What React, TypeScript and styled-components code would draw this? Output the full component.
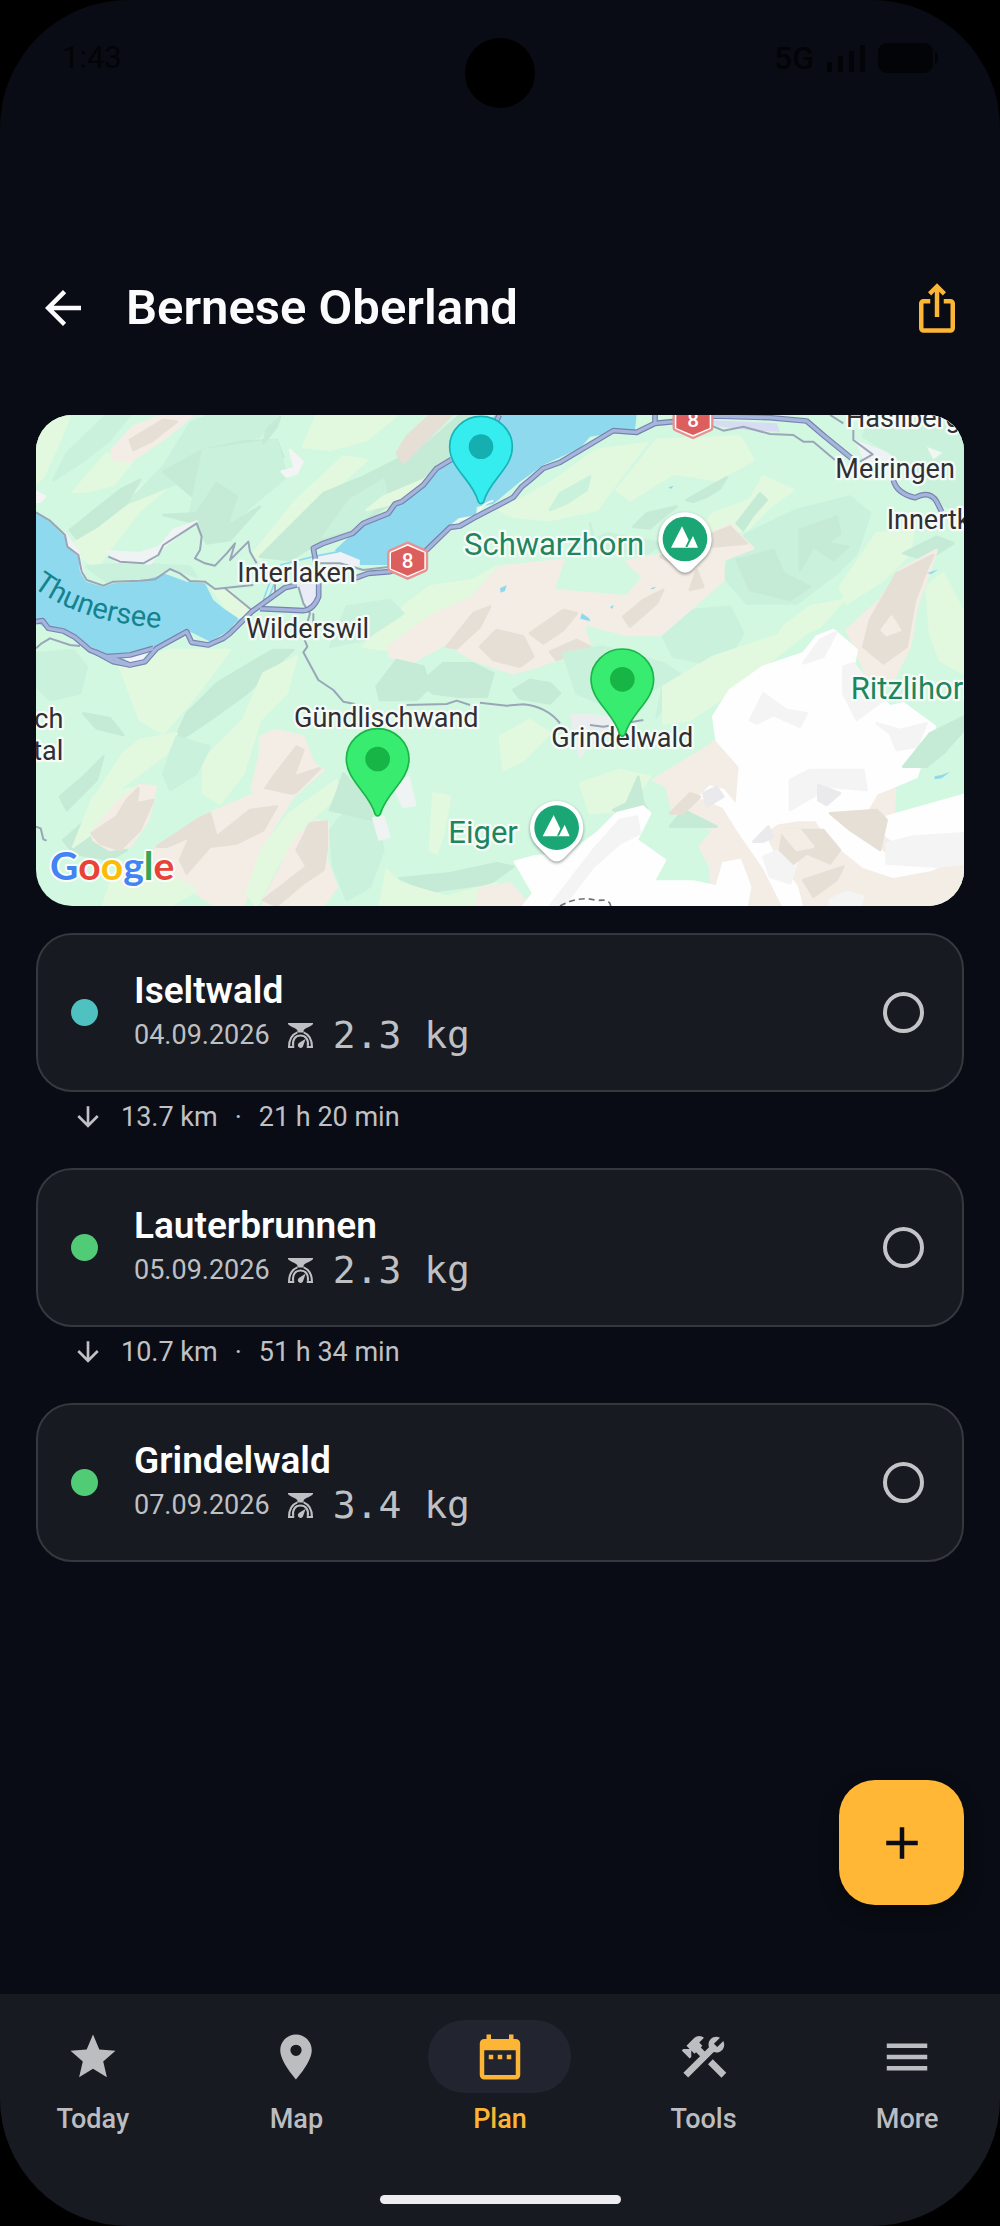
import React from "react";
import styled, { createGlobalStyle } from "styled-components";
import {
  MdAdd,
  MdArrowBack,
  MdArrowDownward,
  MdConstruction,
  MdDateRange,
  MdIosShare,
  MdMenu,
  MdPlace,
  MdStar,
} from "react-icons/md";

const stops = [
  {
    id: 1,
    name: "Iseltwald",
    date: "04.09.2026",
    weight: "2.3 kg",
    color: "#4fc1c0",
    leg: { distance: "13.7 km", time: "21 h 20 min" },
  },
  {
    id: 2,
    name: "Lauterbrunnen",
    date: "05.09.2026",
    weight: "2.3 kg",
    color: "#52cb76",
    leg: { distance: "10.7 km", time: "51 h 34 min" },
  },
  {
    id: 3,
    name: "Grindelwald",
    date: "07.09.2026",
    weight: "3.4 kg",
    color: "#52cb76",
    leg: null,
  },
];

const tabs = [
  { label: "Today", icon: MdStar },
  { label: "Map", icon: MdPlace },
  { label: "Plan", icon: MdDateRange },
  { label: "Tools", icon: MdConstruction },
  { label: "More", icon: MdMenu },
];

const LIGHT = "#e2f9df";
const MINT = "#c5ead5";
const MINT_SOFT = "#caf1dc";
const SAND = "#f3ede5";
const SAND_DARK = "#e6dfd6";
const SNOW = "#fefefe";
const SNOW_DARK = "#f4f4f5";

// relief facets, painted in order: [fill, points]
const relief: [string, string][] = [
  [LIGHT, "18,45 120,45 90,120 40,230 18,250"],
  [MINT_SOFT, "230,45 300,45 240,120 150,190 70,240 110,160"],
  [LIGHT, "130,430 260,320 360,240 470,140 540,95 500,190 330,330 200,500 150,470"],
  [LIGHT, "130,275 230,160 310,180 250,255 160,275"],
  [MINT_SOFT, "290,310 400,200 480,70 540,45 740,45 690,110 510,150 440,250 340,290"],
  [MINT, "400,215 520,150 640,125 740,120 760,170 700,150 610,200 560,290 500,300"],
  [MINT_SOFT, "520,150 740,120 770,230 650,330 560,420 480,340"],
  [MINT, "120,390 270,270 330,240 290,310 200,380 140,415"],
  [MINT, "400,345 500,340 560,250 620,290 590,380 690,320 600,420 530,430 500,370"],
  [MINT_SOFT, "170,500 300,490 480,500 500,530 420,500 370,530 230,545"],
  [MINT, "710,90 750,50 740,80 700,130"],
  [LIGHT, "860,45 1100,45 1010,120 900,150 820,140"],
  [LIGHT, "670,460 800,300 940,170 1010,180 900,280 760,400 690,480"],
  [MINT, "690,470 880,280 1000,230 1180,140 1290,45 1370,45 1260,180 1100,300 960,390 860,430 780,480"],
  [MINT_SOFT, "960,300 1060,240 1070,290 980,380 880,410"],
  [LIGHT, "1010,330 1060,290 1180,240 1240,190 1170,260 1090,310"],
  [SAND, "245,150 310,80 400,45 490,45 410,110 300,185 250,180"],
  [SAND_DARK, "300,120 400,60 440,65 370,120 310,150"],
  [SAND_DARK, "1100,160 1130,110 1200,45 1265,45 1200,110 1120,190"],
  [SNOW_DARK, "755,215 795,205 780,150 817,185 800,220 770,230"],
  [SNOW_DARK, "18,275 45,290 30,305 18,305"],
  ["#f0f3f3", "235,455 330,460 390,440 430,390 500,365 400,440 360,490 260,485"],
  ["#f0f3f3", "105,400 145,455 160,530 140,480 115,440"],
  [LIGHT, "550,570 590,565 660,630 630,655 590,625"],
  [LIGHT, "1410,330 1560,250 1700,150 1850,130 1780,220 1700,330 1560,360 1450,350"],
  [MINT_SOFT, "1590,280 1680,230 1670,270 1610,310 1560,330"],
  [LIGHT, "1880,120 2130,110 2170,180 2060,240 1930,220 1800,300 1760,270"],
  [MINT, "1970,300 2040,260 2090,232 2070,265 2030,290 1990,305"],
  [MINT, "1810,380 1850,340 1940,320 1900,350 1860,385"],
  [MINT_SOFT, "1680,370 1690,420 1730,400 1900,430 1850,460 1700,450"],
  [LIGHT, "2200,230 2290,270 2220,320 2150,390 2000,400 2050,340 2160,300"],
  [MINT, "2120,370 2190,280 2210,300 2170,345 2140,390"],
  [MINT_SOFT, "2150,400 2300,330 2460,290 2520,340 2480,460 2420,520 2300,610 2150,610 2080,530 2100,460"],
  [MINT, "2310,390 2420,350 2430,400 2390,430 2455,440 2410,480 2350,440 2310,510"],
  [MINT, "2120,480 2230,450 2260,520 2340,560 2280,600 2160,570"],
  [MINT_SOFT, "2520,45 2802,45 2802,340 2700,300 2600,170 2500,110"],
  [LIGHT, "2430,560 2540,400 2650,390 2640,460 2560,540 2450,610"],
  [MINT, "2620,460 2720,410 2770,430 2690,480"],
  [LIGHT, "2260,680 2340,620 2440,600 2370,680 2240,740 2200,790"],
  [LIGHT, "2690,560 2740,520 2802,640 2802,820 2730,780 2700,700"],
  [MINT_SOFT, "1990,630 2100,620 2140,700 2080,800 1930,770 1900,710"],
  [LIGHT, "1120,620 1200,560 1330,540 1400,500 1320,590 1190,660 1070,750 1000,740"],
  [MINT_SOFT, "950,620 1080,600 1120,640 1000,720 900,740"],
  [SAND, "1075,740 1200,650 1330,590 1410,500 1600,480 1570,570 1790,590 1840,530 1790,485 1890,465 2100,375 2170,445 2080,480 2080,540 1990,620 1890,705 1790,705 1660,670 1680,740 1520,800 1450,820 1330,780 1250,730 1140,790 1080,770"],
  [SAND_DARK, "1350,740 1400,690 1480,710 1510,770 1470,800 1390,780"],
  [SAND_DARK, "1250,740 1330,640 1380,620 1350,680 1280,745"],
  [SAND_DARK, "1890,470 2000,420 2100,380 2150,430 2040,440 1930,490"],
  [SAND_DARK, "1780,650 1840,600 1900,570 1880,610 1800,680"],
  [SAND_DARK, "1500,700 1600,630 1640,640 1600,690 1540,730"],
  [SAND_DARK, "1980,570 2000,510 2020,560"],
  [SAND_DARK, "1560,755 1640,720 1680,740 1580,780"],
  [SAND, "2720,450 2610,510 2550,600 2450,690 2500,800 2510,840 2590,840 2640,740 2660,620 2700,510"],
  [SAND_DARK, "2710,465 2600,520 2560,590 2520,660 2500,740 2560,790 2630,740 2655,600 2690,510"],
  [SAND, "2555,690 2585,650 2610,690 2570,705"],
  [MINT, "1040,860 1100,780 1180,800 1200,860 1160,900 1050,900"],
  [MINT, "1170,850 1240,790 1330,790 1390,820 1370,890 1290,890 1210,880"],
  [MINT, "1450,870 1500,840 1560,850 1590,880 1560,910 1470,895"],
  [MINT_SOFT, "1600,760 1720,740 1900,790 1960,830 1880,950 1900,850 1760,930 1640,880"],
  [LIGHT, "1900,860 2050,770 2260,700 2340,690 2200,800 2110,870 1980,960 1900,970"],
  [LIGHT, "1410,1010 1500,960 1560,1000 1480,1080 1420,1110"],
  [LIGHT, "1650,1150 1770,1110 1860,1130 1790,1230 1680,1240"],
  [MINT, "430,1030 470,940 560,850 660,790 730,750 790,750 650,880 540,960 480,1000"],
  [LIGHT, "270,800 420,750 600,750 540,830 470,920 400,1000 330,960"],
  [LIGHT, "520,1080 640,960 700,820 800,770 770,880 690,960 640,1120 570,1210 520,1180"],
  [MINT_SOFT, "18,760 130,750 170,800 150,880 60,900 18,860"],
  [MINT, "160,940 240,955 280,1005 200,985"],
  [LIGHT, "280,1060 330,1020 440,1000 410,1060 250,1180 190,1200"],
  [MINT, "90,1190 160,1130 220,1070 200,1140 110,1230"],
  [MINT, "100,1320 180,1250 200,1290 190,1330 290,1350 240,1380 130,1360"],
  [MINT_SOFT, "400,1120 440,1010 540,1040 500,1120 420,1170"],
  [LIGHT, "130,1340 190,1190 330,1160 200,1290"],
  [SAND, "185,1300 260,1210 330,1155 377,1160 355,1260 300,1340 240,1350 190,1320"],
  [SAND_DARK, "185,1300 260,1250 290,1200 325,1165 320,1210 370,1200 330,1290 270,1350 210,1330"],
  [SAND, "690,1010 740,990 820,1010 850,1090 880,1110 800,1180 700,1190 665,1170 690,1060"],
  [SAND_DARK, "730,1130 800,1040 820,1050 790,1130 870,1105 800,1175 730,1200 690,1190"],
  [SAND, "380,1340 540,1240 700,1170 790,1190 720,1300 680,1400 640,1518 560,1518 480,1470 440,1430 400,1430 350,1410"],
  [SAND_DARK, "380,1340 500,1260 540,1240 560,1310 660,1230 740,1220 700,1290 620,1330 540,1340 470,1420 450,1380 480,1310 410,1340"],
  [LIGHT, "250,1420 380,1400 500,1470 420,1518 220,1518"],
  [LIGHT, "650,1480 700,1340 780,1240 920,1140 930,1180 820,1280 740,1400 680,1518"],
  [SAND, "700,1500 800,1310 860,1260 895,1270 890,1380 920,1460 880,1518 700,1518"],
  [SAND_DARK, "700,1500 830,1400 800,1350 840,1270 890,1265 890,1350 880,1410 820,1450 740,1518"],
  [MINT_SOFT, "900,1290 960,1220 1040,1250 1060,1350 1020,1460 950,1500 910,1400"],
  [MINT, "920,1180 940,1120 1010,1190 1030,1260 900,1230"],
  [LIGHT, "1200,1350 1210,1180 1260,1190 1240,1300 1220,1360"],
  [MINT, "1110,1435 1260,1420 1400,1390 1450,1400 1380,1450 1200,1475"],
  [LIGHT, "1070,1410 1110,1450 1250,1490 1400,1450 1470,1518 1050,1518"],
  [SAND, "1340,1518 1350,1465 1440,1450 1500,1518"],
  ["#f0f3f3", "1095,1165 1135,1130 1155,1215 1120,1220"],
  ["#f0f3f3", "1030,1255 1060,1250 1078,1310 1048,1318"],
  ["#ecedef", "1625,945 1670,945 1790,960 1800,1000 1690,1010 1650,1070 1640,1030"],
  [MINT, "1750,1230 1790,1210 1825,1130 1840,1210 1850,1225 1780,1250"],
  [SAND, "1870,1140 2000,1060 2080,1010 2160,1080 2300,1250 2500,1230 2560,1150 2595,1170 2590,1260 2802,1380 2802,1518 2050,1518 2040,1400 2010,1340 2050,1290 1930,1240 1910,1160"],
  [MINT, "1920,1280 1960,1230 2060,1280 1980,1280"],
  [SNOW, "2360,710 2410,690 2480,750 2470,800 2580,920 2620,910 2715,980 2690,1040 2660,1130 2590,1160 2540,1180 2500,1250 2450,1260 2300,1260 2240,1270 2200,1300 2240,1380 2300,1460 2315,1518 2260,1518 2200,1400 2130,1300 2080,1220 2010,1190 2040,1160 2080,1170 2120,1220 2130,1100 2060,1020 2050,950 2100,870 2200,800 2320,760"],
  [SNOW, "2330,1220 2480,1250 2560,1360 2650,1370 2560,1300 2570,1250 2802,1185 2802,1370 2700,1410 2590,1430 2500,1400 2400,1320"],
  [SNOW, "1455,1385 1510,1370 1620,1360 1700,1300 1760,1240 1840,1220 1860,1240 1820,1320 1905,1380 1870,1445 1990,1445 2060,1460 2080,1390 2130,1380 2160,1460 2150,1518 1480,1518 1510,1480"],
  [SNOW_DARK, "2160,960 2200,880 2270,930 2330,940 2310,980 2230,945 2180,970"],
  [SNOW_DARK, "2320,790 2370,720 2420,695 2380,770"],
  [SNOW_DARK, "2540,970 2610,990 2690,970 2660,1040 2600,1050 2580,1000"],
  [SNOW_DARK, "2440,800 2470,790 2560,900 2480,960 2440,880"],
  [SNOW_DARK, "2280,1140 2340,1110 2500,1110 2510,1170 2400,1160 2280,1230"],
  [SNOW_DARK, "2570,1330 2650,1310 2802,1300 2800,1390 2720,1400 2570,1390"],
  [SNOW_DARK, "1690,1350 1770,1260 1820,1250 1830,1300 1770,1330 1690,1400 1600,1518 1560,1518"],
  [SNOW_DARK, "2200,1370 2250,1350 2300,1390 2280,1450 2220,1430"],
  [SNOW_DARK, "2400,1500 2450,1475 2500,1490 2490,1518 2400,1518"],
  ["#eae9eb", "2020,1180 2060,1160 2080,1190 2030,1220"],
  ["#eae9eb", "2170,1325 2215,1280 2230,1310 2200,1325"],
  ["#eae9eb", "2365,1155 2430,1180 2390,1215 2365,1200"],
  [SAND_DARK, "2260,1290 2380,1290 2430,1350 2400,1390 2330,1360 2290,1390 2250,1350"],
  [SAND, "2250,1290 2310,1290 2350,1340 2300,1350"],
  [SAND_DARK, "2400,1240 2540,1230 2570,1260 2550,1350 2460,1290"],
  [SAND_DARK, "2320,1440 2440,1400 2420,1440 2350,1490"],
  [SAND_DARK, "1920,1240 1980,1180 2010,1190 1960,1240"],
  [MINT, "2620,1100 2700,1000 2802,950 2802,990 2740,1060 2690,1100"],
];

const shields = [
  { x: 1133, y: 482 },
  { x: 1989, y: 60 },
];

const peaks = [
  { x: 1965, y: 417 },
  { x: 1580, y: 1283 },
];

const towns = [
  { name: "Interlaken", x: 622, y: 546 },
  { name: "Wilderswil", x: 648, y: 713 },
  { name: "Hasliberg", x: 2448, y: 80 },
  { name: "Meiringen", x: 2416, y: 235 },
  { name: "Innertkirchen", x: 2570, y: 388 },
  { name: "Gündlischwand", x: 792, y: 980 },
  { name: "Grindelwald", x: 1564, y: 1041 },
];

const summits = [
  { name: "Schwarzhorn", x: 1302, y: 465 },
  { name: "Ritzlihorn", x: 2462, y: 898 },
  { name: "Eiger", x: 1255, y: 1330 },
];

const pins = [
  { x: 1353, y: 140, fill: "#35edef", line: "#17b4b8", dot: "#15aeb1" },
  { x: 1043, y: 1077, fill: "#37ec6e", line: "#1bb44b", dot: "#16b546" },
  { x: 1777, y: 838, fill: "#37ec6e", line: "#1bb44b", dot: "#16b546" },
];

const mainRoads = [
  "M960 540L1015 520L1080 515L1150 490L1195 445L1260 382L1290 378L1330 355L1450 292L1475 260L1500 240L1540 205L1590 187L1750 92L1820 97L1875 70L1930 65L1990 50L2050 48L2220 53L2330 63L2385 110L2465 175",
  "M2590 240Q2600 280 2655 293Q2700 270 2720 305L2735 335",
  "M860 500L850 445L880 430L968 400L1000 370L1075 340L1095 312L1115 305L1180 255L1220 205L1265 178M1400 62L1408 45M1875 45V75",
  "M866 550V590Q850 630 820 632L690 626M800 555L765 563L665 635L600 700L580 715L535 735L485 727L470 695L380 745L345 785L300 795L240 770",
  "M18 665L38 662L55 685L100 693L135 712L180 750L230 770L300 765L370 745",
  "M195 755L250 785L300 795",
];

const minorRoads = [
  "M18 337L60 362L105 405L112 440L145 465L155 515L170 540L220 557L250 545L330 542L375 538L420 507L450 520L480 543L525 545L555 567L670 555",
  "M235 470L270 485L340 490L385 465L400 435L500 370L515 410L510 450L495 475L525 490L555 497L590 460L615 430L600 480L655 425L660 455L680 490",
  "M585 565L665 630M805 560L820 610L840 640L820 710L832 740L820 757L865 840L910 870L940 905L975 912",
  "M1130 915L1250 912L1280 902L1320 915M1350 908L1430 917L1480 913Q1550 920 1590 970M1680 975L1720 980L1840 960",
  "M18 745L35 730L60 715L120 735L150 738M18 1280L32 1285L40 1318L50 1322",
  "M2040 75L2080 92L2140 80L2220 102L2290 105L2320 125L2350 125L2415 180M2490 185L2528 163L2470 120L2470 90M2400 45L2440 70",
  "M735 550V590M850 640V700M850 490H930L1000 510L1080 500",
];

function RouteMap() {
  return (
    <MapSvg viewBox="18 45 2784 1473" preserveAspectRatio="xMidYMid slice">
      <rect x="18" y="45" width="2784" height="1473" fill="#d2f8e2" />
      {relief.map(([fill, points]) => (
        <polygon
          key={points}
          points={points}
          fill={fill}
          stroke={fill}
          strokeWidth="8"
          strokeLinejoin="round"
        />
      ))}

      {/* lakes */}
      <g fill="#8fd9ee">
        <path d="M18 337L60 365L105 410L112 440L145 470L150 515L168 545L220 560L250 550L330 545L385 528L400 520L430 530L470 545L525 550L550 600L580 625L625 655L600 690L540 725L490 700L470 692L400 735L370 750L300 770L230 768L190 745L130 705L40 680L18 665Z" />
        <path d="M915 450L985 385L1075 343L1110 312L1160 275L1215 215L1265 180L1395 45H1820L1815 90L1680 110L1650 145L1540 195L1470 245L1390 312L1340 320L1338 345L1285 355L1250 385L1200 440L1080 495H990L985 480L925 465Z" />
        <path d="M1410 565l20-10l-5 18l-13 5zM1655 640l22 14l4 10l-30-8zM1860 565l18-5l-8 8zM1740 620l12-5l-6 12zM1915 262l16-5l-8 10z" />
        <path d="M2715 1128l20-3l25-10l-25 20l-22 3zM2690 520l35-12l-20 14z" />
      </g>
      <path d="M865 465L930 455L990 480L988 497L930 500L860 490Z" fill="#eef1f5" />
      <path d="M805 550L870 550L865 600L830 625Z" fill="#e9ecf6" />
      <path d="M275 768L350 758L335 782L300 786Z" fill="#f1f5fb" />
      <path d="M1390 302Q1345 315 1340 350L1290 358L1250 392M1470 252L1550 205L1660 152" fill="none" stroke="#f4f9f4" strokeWidth="5" />
      <path d="M2040 60L2240 70L2250 95L2170 92L2060 78Z" fill="#d7dcf3" />
      <path d="M2475 120L2570 155L2620 200L2600 260L2500 180Z" fill="#eff2f4" />
      <path d="M2690 140L2738 158L2710 178Z" fill="#f1f6f3" />
      <path d="M700 600L722 540M712 605L735 545M750 495L850 470L925 455L940 430M610 670L690 625" fill="none" stroke="#8fd9ee" strokeWidth="5" />

      {/* roads */}
      <g fill="none" stroke="#9aa6b8" strokeWidth="6" strokeLinejoin="round">
        {minorRoads.map((d) => (
          <path key={d} d={d} />
        ))}
      </g>
      <g fill="none" stroke="#7683ae" strokeWidth="17" strokeLinejoin="round">
        {mainRoads.map((d) => (
          <path key={d} d={d} />
        ))}
      </g>
      <g fill="none" stroke="#a6b5dc" strokeWidth="10" strokeLinejoin="round">
        {mainRoads.map((d) => (
          <path key={d} d={d} />
        ))}
      </g>
      <path
        d="M1590 1518Q1650 1485 1700 1502Q1740 1495 1742 1518"
        fill="none"
        stroke="#6f7177"
        strokeWidth="5"
        strokeDasharray="18 12"
      />

      {shields.map((shield) => (
        <g key={shield.x} transform={`translate(${shield.x} ${shield.y})`}>
          <path
            d="M0 -54L54 -30Q58 -28 58 -22V22Q58 28 54 30L0 54L-54 30Q-58 28 -58 22V-22Q-58 -28 -54 -30Z"
            fill="#fff"
            stroke="#e79291"
            strokeWidth="7"
          />
          <path d="M0 -45L50 -24V24L0 45L-50 24V-24Z" fill="#dc5e5d" />
          <ShieldText x="0" y="22">8</ShieldText>
        </g>
      ))}

      {towns.map((town) => (
        <TownText key={town.name} x={town.x} y={town.y}>{town.name}</TownText>
      ))}
      <TownText x="100" y="983" textAnchor="end">ch</TownText>
      <TownText x="100" y="1079" textAnchor="end">tal</TownText>
      {summits.map((summit) => (
        <SummitText key={summit.name} x={summit.x} y={summit.y}>
          {summit.name}
        </SummitText>
      ))}
      <path id="thunersee" d="M8 560Q160 678 440 686" fill="none" />
      <LakeText>
        <textPath href="#thunersee">Thunersee</textPath>
      </LakeText>

      {peaks.map((peak) => (
        <Peak key={peak.x} transform={`translate(${peak.x} ${peak.y})`}>
          <path d="M0 -80A80 80 0 0 1 60 53L20 93Q0 110 -20 93L-60 53A80 80 0 0 1 0 -80Z" fill="#fff" />
          <circle r="67" fill="#1ba675" />
          <path d="M-42 26L-9 -38L11 3L1 24H7L24 -9L39 26Z" fill="#fff" />
        </Peak>
      ))}

      {pins.map((pin) => (
        <g key={pin.x} transform={`translate(${pin.x} ${pin.y})`}>
          <path
            d="M0 -91C52 -91 94 -49 94 0C94 66 25 100 8 165Q0 177 -8 165C-25 100 -94 66 -94 0C-94 -49 -52 -91 0 -91Z"
            fill={pin.fill}
            stroke={pin.line}
            strokeWidth="5"
          />
          <circle r="37" fill={pin.dot} />
        </g>
      ))}

      <LogoText x="60" y="1439">
        <tspan fill="#4284f3">G</tspan>
        <tspan fill="#e94236">o</tspan>
        <tspan fill="#fabc06">o</tspan>
        <tspan fill="#4284f3">g</tspan>
        <tspan fill="#35a753">l</tspan>
        <tspan fill="#e94236">e</tspan>
      </LogoText>
    </MapSvg>
  );
}

function ScaleIcon() {
  return (
    <svg width="25" height="25" viewBox="0 0 24 24" aria-hidden="true">
      <path d="M0 0H24V1C22 3.500 17 4.500 15 7V9H9V7C7 4.500 2 3.500 0 1Z" fill="currentColor" />
      <path
        d="M9 9C4 11 1 16 1 23H6M15 9C20 11 23 16 23 23H18M5 22C4 16 7 12 12 12S20 16 19 22"
        fill="none"
        stroke="currentColor"
        strokeWidth="2"
      />
      <path d="M17 15L14.600 21.800A2.600 2.600 0 1 1 10.800 19Z" fill="currentColor" />
    </svg>
  );
}

export default function App() {
  return (
    <>
      <GlobalStyle />
      <Screen>
        <StatusBar>
          <Clock>1:43</Clock>
          <Camera />
          <StatusIcons>
            <span>5G</span>
            <svg width="40" height="27" viewBox="0 0 40 27" aria-hidden="true">
              <path d="M1 17h5v10H1zM12 11h5v16h-5zM23 6h5v21h-5zM34 0h5v27h-5z" fill="currentColor" />
            </svg>
            <svg width="60" height="30" viewBox="0 0 60 30" aria-hidden="true">
              <rect width="55" height="30" rx="9" fill="currentColor" />
              <path d="M57 9q3 1 3 6t-3 6z" fill="currentColor" />
            </svg>
          </StatusIcons>
        </StatusBar>

        <Header>
          <IconButton aria-label="Back">
            <MdArrowBack />
          </IconButton>
          <Title>Bernese Oberland</Title>
          <IconButton $accent aria-label="Share">
            <MdIosShare />
          </IconButton>
        </Header>

        <Main>
          <MapCard>
            <RouteMap />
          </MapCard>

          <StopList>
            {stops.map((stop) => (
              <li key={stop.id}>
                <StopCard htmlFor={`stop-${stop.id}`}>
                  <Dot $color={stop.color} />
                  <StopInfo>
                    <StopName>{stop.name}</StopName>
                    <StopMeta>
                      <span>{stop.date}</span>
                      <ScaleIcon />
                      <Weight>{stop.weight}</Weight>
                    </StopMeta>
                  </StopInfo>
                  <StopCheck type="checkbox" id={`stop-${stop.id}`} />
                </StopCard>
                {stop.leg && (
                  <Leg>
                    <MdArrowDownward />
                    <span>{stop.leg.distance}</span>
                    <span>·</span>
                    <span>{stop.leg.time}</span>
                  </Leg>
                )}
              </li>
            ))}
          </StopList>

          <Fab aria-label="Add stop">
            <MdAdd />
          </Fab>
        </Main>

        <BottomBar>
          <Tabs>
            {tabs.map(({ label, icon: Icon }) => (
              <Tab key={label} href={`#${label.toLowerCase()}`} $active={label === "Plan"}>
                <TabIcon $active={label === "Plan"}>
                  <Icon />
                </TabIcon>
                {label}
              </Tab>
            ))}
          </Tabs>
          <HomeIndicator />
        </BottomBar>
      </Screen>
    </>
  );
}

const GlobalStyle = createGlobalStyle`
  * {
    box-sizing: border-box;
  }

  body {
    margin: 0;
    background-color: #000;
    font-family: Roboto, "Liberation Sans", sans-serif;
  }
`;

const Screen = styled.div`
  display: flex;
  flex-direction: column;
  min-height: 100vh;
  background-color: #090c14;
  border-radius: 128px;
  overflow: hidden;
`;

const StatusBar = styled.div`
  display: grid;
  grid-template-columns: 1fr 70px 1fr;
  align-items: start;
  padding: 38px 62px 0;
  margin-bottom: 128px;
  color: #020407;
`;

const Clock = styled.span`
  padding-top: 2px;
  font-size: 31px;
  line-height: 36px;
`;

const Camera = styled.div`
  height: 70px;
  border-radius: 50%;
  background-color: #000;
`;

const StatusIcons = styled.div`
  display: flex;
  align-items: center;
  justify-content: flex-end;
  gap: 12px;
  padding-top: 2px;
  font-size: 32px;
  font-weight: 500;
  line-height: 36px;
`;

const Header = styled.header`
  display: flex;
  align-items: center;
  gap: 36px;
  height: 143px;
  padding: 0 36px;
`;

const IconButton = styled.button<{ $accent?: boolean }>`
  display: flex;
  padding: 0;
  border: none;
  background: none;
  color: ${(props) => (props.$accent ? "#fdb535" : "#fbfbfd")};
  font-size: 54px;
  cursor: pointer;
`;

const Title = styled.h1`
  flex: 1;
  margin: 0;
  color: #fbfbfd;
  font-size: 49px;
  font-weight: 600;
  line-height: 56px;
`;

const Main = styled.main`
  display: flex;
  flex: 1;
  flex-direction: column;
  padding: 36px 36px 89px;
`;

const MapCard = styled.div`
  aspect-ratio: 928 / 491;
  border-radius: 36px;
  overflow: hidden;
`;

const MapSvg = styled.svg`
  display: block;
  width: 100%;
  height: 100%;
`;

const TownText = styled.text`
  fill: #2f3033;
  stroke: #f6fbf8;
  stroke-width: 14px;
  stroke-linejoin: round;
  paint-order: stroke;
  font-size: 81px;
`;

const SummitText = styled(TownText)`
  fill: #1d865d;
  font-size: 93px;
`;

const LakeText = styled.text`
  fill: #12838f;
  font-size: 87px;
`;

const ShieldText = styled.text`
  fill: #fff;
  font-size: 62px;
  font-weight: 500;
  text-anchor: middle;
`;

const LogoText = styled.text`
  stroke: #fafdfb;
  stroke-width: 12px;
  stroke-linejoin: round;
  paint-order: stroke;
  font-family: Lato, Roboto, sans-serif;
  font-size: 117px;
  font-weight: 700;
`;

const Peak = styled.g`
  filter: drop-shadow(0 4px 5px rgba(40, 50, 50, 0.5));
`;

const StopList = styled.ul`
  margin: 27px 0 0;
  padding: 0;
  list-style: none;
`;

const StopCard = styled.label`
  display: flex;
  align-items: center;
  padding: 33px 38px 33px 33px;
  border: 2px solid #36383e;
  border-radius: 36px;
  background-color: #171a20;
  cursor: pointer;
`;

const Dot = styled.span<{ $color: string }>`
  width: 27px;
  height: 27px;
  border-radius: 50%;
  background-color: ${(props) => props.$color};
`;

const StopInfo = styled.div`
  flex: 1;
  padding: 1px 0 0 36px;
`;

const StopName = styled.div`
  color: #fff;
  font-size: 37px;
  font-weight: 600;
  line-height: 44px;
`;

const StopMeta = styled.div`
  display: flex;
  align-items: center;
  color: #bfc0c4;
  font-size: 27px;
  line-height: 44px;

  svg {
    margin: 0 20px 0 18px;
  }
`;

const Weight = styled.span`
  font-family: "DejaVu Sans Mono", monospace;
  font-size: 38px;
`;

const StopCheck = styled.input`
  appearance: none;
  width: 41px;
  height: 41px;
  margin: 0;
  border: 4px solid #c3c4c8;
  border-radius: 50%;
  cursor: pointer;

  &:checked {
    background-color: #fdb535;
    border-color: #fdb535;
  }
`;

const Leg = styled.div`
  display: flex;
  align-items: center;
  gap: 17px;
  padding: 9px 36px 35px;
  color: #c0c1c5;
  font-size: 27px;
  line-height: 32px;

  svg {
    font-size: 32px;
  }
`;

const Fab = styled.button`
  display: flex;
  align-items: center;
  justify-content: center;
  align-self: flex-end;
  width: 125px;
  height: 125px;
  margin-top: auto;
  border: none;
  border-radius: 36px;
  background-color: #ffb735;
  box-shadow: 0 8px 20px rgba(0, 0, 0, 0.3);
  color: #0a0d14;
  font-size: 54px;
  cursor: pointer;
`;

const BottomBar = styled.div`
  display: flex;
  flex-direction: column;
  align-items: center;
  padding: 26px 0 22px;
  background-color: #171a20;
`;

const Tabs = styled.nav`
  display: grid;
  grid-template-columns: repeat(5, 1fr);
  gap: 18px;
  width: 100%;
`;

const Tab = styled.a<{ $active: boolean }>`
  display: flex;
  flex-direction: column;
  align-items: center;
  gap: 8px;
  color: ${(props) => (props.$active ? "#fdb535" : "#bcbdc1")};
  font-size: 27px;
  font-weight: 500;
  line-height: 36px;
  text-decoration: none;
`;

const TabIcon = styled.span<{ $active: boolean }>`
  display: flex;
  align-items: center;
  justify-content: center;
  width: 143px;
  height: 73px;
  border-radius: 36px;
  background-color: ${(props) => (props.$active ? "#22242f" : "transparent")};
  font-size: 54px;
`;

const HomeIndicator = styled.div`
  width: 241px;
  height: 9px;
  margin-top: 58px;
  border-radius: 5px;
  background-color: #ededef;
`;
